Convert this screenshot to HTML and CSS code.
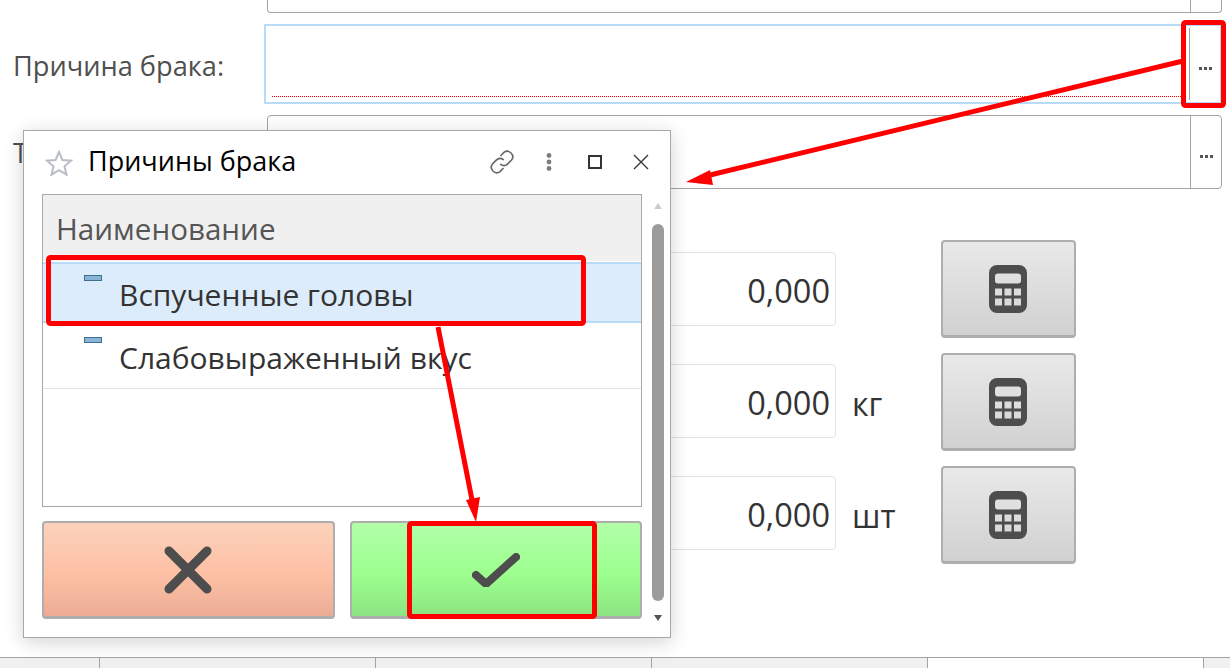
FILE: index.html
```html
<!DOCTYPE html>
<html lang="ru">
<head>
<meta charset="utf-8">
<title>Причины брака</title>
<link rel="stylesheet" href="styles.css">
</head>
<body>
<div class="page">
  <main class="form">
    <div class="field field-cut"><span class="field-main"></span><span class="field-btn"></span></div>
    <div class="row row-focus">
      <label class="label">Причина брака:</label>
      <div class="field field-focus">
        <span class="field-main"><span class="invalid"></span></span>
        <span class="field-btn"><svg class="dots" viewBox="0 0 13 3"><path d="M0 0h3v3H0zM5 0h3v3H5zM10 0h3v3h-3z"/></svg></span>
      </div>
    </div>
    <div class="row row-type">
      <label class="label label-type">Т</label>
      <div class="field field-type">
        <span class="field-main"></span>
        <span class="field-btn"><svg class="dots" viewBox="0 0 13 3"><path d="M0 0h3v3H0zM5 0h3v3H5zM10 0h3v3h-3z"/></svg></span>
      </div>
    </div>
    <div class="values">
      <div class="inputs">
        <div class="value-row"><div class="value">0,000</div><span class="unit"></span></div>
        <div class="value-row"><div class="value">0,000</div><span class="unit">кг</span></div>
        <div class="value-row"><div class="value">0,000</div><span class="unit">шт</span></div>
      </div>
      <div class="calcs">
        <button class="calc"><svg viewBox="0 0 38 48"><use href="#calc-icon"/></svg></button>
        <button class="calc"><svg viewBox="0 0 38 48"><use href="#calc-icon"/></svg></button>
        <button class="calc"><svg viewBox="0 0 38 48"><use href="#calc-icon"/></svg></button>
      </div>
    </div>
  </main>
  <footer class="tabs">
    <span class="tab tab-first"></span><span class="tab"></span><span class="tab"></span><span class="tab"></span><span class="tab tab-active"></span><span class="tab tab-last"></span>
  </footer>
</div>

<section class="dialog">
  <header class="dialog-head">
    <svg class="star" viewBox="0 0 28 26"><path d="M14 2l3.400 8 8.600.7-6.500 5.600 2 8.400L14 20.200 6.500 24.700l2-8.400L2 10.700l8.600-.7z"/></svg>
    <h1 class="dialog-title">Причины брака</h1>
    <svg class="icon-link" viewBox="0 0 24 24"><path d="M11 6l2.800-2.800a5 5 0 0 1 7 7L17.300 13.700a5 5 0 0 1-6.500.5M13 18l-2.800 2.800a5 5 0 0 1-7-7l3.500-3.500a5 5 0 0 1 6.500-.5"/></svg>
    <svg class="icon-more" viewBox="0 0 6 18"><circle cx="3" cy="2.500" r="2.400"/><circle cx="3" cy="9" r="2.400"/><circle cx="3" cy="15.500" r="2.400"/></svg>
    <span class="icon-max"></span>
    <svg class="icon-close" viewBox="0 0 16 16"><path d="M1 1l14 14M15 1L1 15"/></svg>
  </header>
  <div class="dialog-body">
    <div class="dialog-main">
      <div class="table">
        <div class="table-head">Наименование</div>
        <div class="table-row table-row-selected"><i class="row-icon"></i><span>Вспученные головы</span></div>
        <div class="table-row"><i class="row-icon"></i><span>Слабовыраженный вкус</span></div>
      </div>
      <div class="actions">
        <button class="action action-cancel"><svg viewBox="0 0 48 48"><path d="M5 5l38 38M43 5L5 43"/></svg></button>
        <button class="action action-ok"><svg viewBox="0 0 48 34"><path d="M4 22l10 9L44 4"/></svg></button>
      </div>
    </div>
    <div class="scrollbar">
      <span class="arrow-up"></span>
      <span class="thumb"></span>
      <span class="arrow-down"></span>
    </div>
  </div>
</section>

<svg class="marks" viewBox="0 0 1230 668">
  <rect x="1183.500" y="22.500" width="40" height="83" rx="2"/>
  <rect x="48.500" y="257.500" width="535" height="66" rx="2"/>
  <rect x="409.500" y="523.500" width="185" height="93" rx="2"/>
  <path d="M1183 61L706 176"/>
  <path class="head" d="M686 182l24-12 3 15z"/>
  <path d="M438 327L473 505"/>
  <path class="head" d="M476 522l-10-22 14-3z"/>
</svg>

<svg class="defs" width="0" height="0">
  <symbol id="calc-icon" viewBox="0 0 38 48">
    <path fill="#4d4d4d" fill-rule="evenodd" d="M8 0h22a8 8 0 0 1 8 8v32a8 8 0 0 1-8 8H8a8 8 0 0 1-8-8V8a8 8 0 0 1 8-8zM9 8.500a3 3 0 0 0-3 3v4a3 3 0 0 0 3 3h20a3 3 0 0 0 3-3v-4a3 3 0 0 0-3-3zM6 23.500v7h7v-7zM15.500 23.500v7h7v-7zM25 23.500v7h7v-7zM6 33.500v7h7v-7zM15.500 33.500v7h7v-7zM25 33.500v7h7v-7z"/>
  </symbol>
</svg>
</body>
</html>
```
FILE: styles.css
```css
* { box-sizing: border-box; }
html, body { margin: 0; height: 100%; overflow: hidden; background: #fff; }
body { font-family: "Open Sans", "Noto Sans", sans-serif; color: #333; }
.page { height: 668px; display: flex; flex-direction: column; }
.form { flex: 1; display: flex; flex-direction: column; }

.field { display: flex; border: 1px solid #a3a3a3; border-radius: 4px; background: #fff; }
.field-main { flex: 1; position: relative; }
.field-btn { width: 31px; border-left: 1px solid #a3a3a3; display: flex; align-items: center; justify-content: center; padding-top: 8px; }
.dots { width: 13px; height: 3px; fill: #555; }

.field-cut { margin: -1px 8px 0 267px; height: 14px; border-top: 0; border-radius: 0 0 4px 4px; }

.row { display: flex; align-items: center; }
.label { font-size: 27.200px; color: #4f4f4f; padding-left: 13px; line-height: 36px; }
.row-focus { margin-top: 11px; height: 80px; }
.row-focus .label { width: 264px; flex: none; margin-top: 4px; white-space: nowrap; }
.field-focus { flex: none; width: 958px; height: 80px; border: 2px solid #b8dcf8; border-radius: 0; padding: 2px 0; }
.invalid { position: absolute; left: 6px; right: 6px; bottom: 3px; height: 1px; background: repeating-linear-gradient(90deg, #f00 0 1px, #fff 1px 2px); }

.row-type { margin-top: 11px; height: 74px; }
.label-type { width: 267px; flex: none; margin-top: 2px; }
.field-type { flex: none; width: 955px; height: 74px; }

.values { display: flex; margin: 51px 0 0 267px; }
.inputs { width: 674px; display: flex; flex-direction: column; gap: 38px; padding-top: 12px; }
.value-row { display: flex; align-items: center; height: 74px; }
.value { width: 569px; height: 74px; border: 1px solid #e2e2e2; border-radius: 4px; text-align: right; padding-right: 5px; font-size: 32.500px; line-height: 76px; color: #333; }
.unit { margin: 6px 0 0 16px; font-size: 32px; color: #333; line-height: 40px; }
.calcs { display: flex; flex-direction: column; gap: 15px; }
.calc { width: 135px; height: 98px; padding: 0; border: 2px solid #aeaeae; border-bottom-width: 3px; border-radius: 4px; background: linear-gradient(#e9e9e9, #d1d1d1); display: flex; align-items: center; justify-content: center; }
.calc svg { width: 38px; height: 48px; display: block; margin-left: -2px; }

.tabs { height: 11px; display: flex; border-top: 1px solid #a3a3a3; background: #f0f0f0; }
.tab { width: 276px; border-right: 1px solid #a3a3a3; }
.tab-first { width: 100px; }
.tab-active { background: #fff; }
.tab-last { flex: 1; border-right: 0; }

.dialog { position: absolute; left: 23px; top: 130px; width: 648px; height: 508px; background: #fff; border: 1px solid #a8a8a8; box-shadow: 0 4px 18px rgba(0, 0, 0, .18); display: flex; flex-direction: column; }
.dialog-head { height: 63px; flex: none; display: flex; align-items: center; padding-left: 21px; }
.star { width: 28px; height: 26px; fill: none; stroke: #b9bec6; stroke-width: 2; flex: none; }
.dialog-title { margin: -3px 0 0 15px; font-size: 27px; font-weight: 400; color: #000; line-height: 36px; width: 400px; flex: none; white-space: nowrap; }
.icon-link { width: 26px; height: 26px; fill: none; stroke: #666; stroke-width: 1.500; stroke-linecap: round; flex: none; margin: -2px 0 0 1px; }
.icon-more { width: 6px; height: 18px; fill: #7d7d7d; flex: none; margin: -2px 0 0 31px; }
.icon-max { width: 14px; height: 14px; border: 2px solid #333; flex: none; margin: -2px 0 0 36px; }
.icon-close { width: 16px; height: 16px; fill: none; stroke: #333; stroke-width: 1.300; flex: none; margin: -2px 0 0 31px; }

.dialog-body { flex: 1; display: flex; padding: 0 6px 0 18px; }
.dialog-main { width: 600px; flex: none; display: flex; flex-direction: column; }
.table { height: 313px; border: 1px solid #a8a8a8; flex: none; }
.table-head { height: 66px; background: #f0f0f0; font-size: 29.600px; line-height: 68px; padding-left: 13px; color: #555; }
.table-row { display: flex; height: 66px; padding-left: 41px; border-bottom: 1px solid #e2e2e2; font-size: 30px; color: #333; }
.table-row span { margin: 13px 0 0 17px; line-height: 44px; white-space: nowrap; }
.table-row-selected { height: 61px; margin-top: 1px; background: #dcecfb; border-top: 2px solid #b8dcf8; border-bottom: 2px solid #b8dcf8; }
.table-row-selected span { margin-top: 9px; }
.row-icon { display: block; width: 18px; height: 6px; margin-top: 14px; background: #8ab4d6; border: 1px solid #3f6f8f; flex: none; }
.table-row-selected .row-icon { margin-top: 11px; }

.actions { display: flex; gap: 15px; margin-top: 14px; }
.action { flex: 1; height: 98px; padding: 0; border: 2px solid #aeaeae; border-bottom-width: 3px; border-radius: 4px; display: flex; align-items: center; justify-content: center; }
.action svg { display: block; fill: none; stroke: #4d4d4d; stroke-linecap: round; stroke-linejoin: round; }
.action-cancel { background: linear-gradient(#fcd2bb, #fdc0a5 55%, #ebac93); }
.action-cancel svg { width: 48px; height: 48px; stroke-width: 9; }
.action-ok { background: linear-gradient(#b2ffa9, #9cff8e 55%, #8de582); }
.action-ok svg { width: 48px; height: 34px; stroke-width: 8; }

.scrollbar { width: 12px; margin-left: 10px; display: flex; flex-direction: column; align-items: center; padding-top: 9px; }
.arrow-up { width: 0; height: 0; border: 4px solid transparent; border-top: 0; border-bottom: 6px solid #ccc; }
.thumb { width: 12px; height: 377px; margin-top: 15px; background: #9b9b9b; border-radius: 6px; }
.arrow-down { width: 0; height: 0; margin-top: 14px; border: 4px solid transparent; border-bottom: 0; border-top: 6px solid #555; }

.marks { position: absolute; left: 0; top: 0; width: 1230px; height: 668px; fill: none; stroke: #f00; stroke-width: 5; pointer-events: none; }
.marks .head { fill: #f00; stroke: none; }
.defs { position: absolute; }
```
